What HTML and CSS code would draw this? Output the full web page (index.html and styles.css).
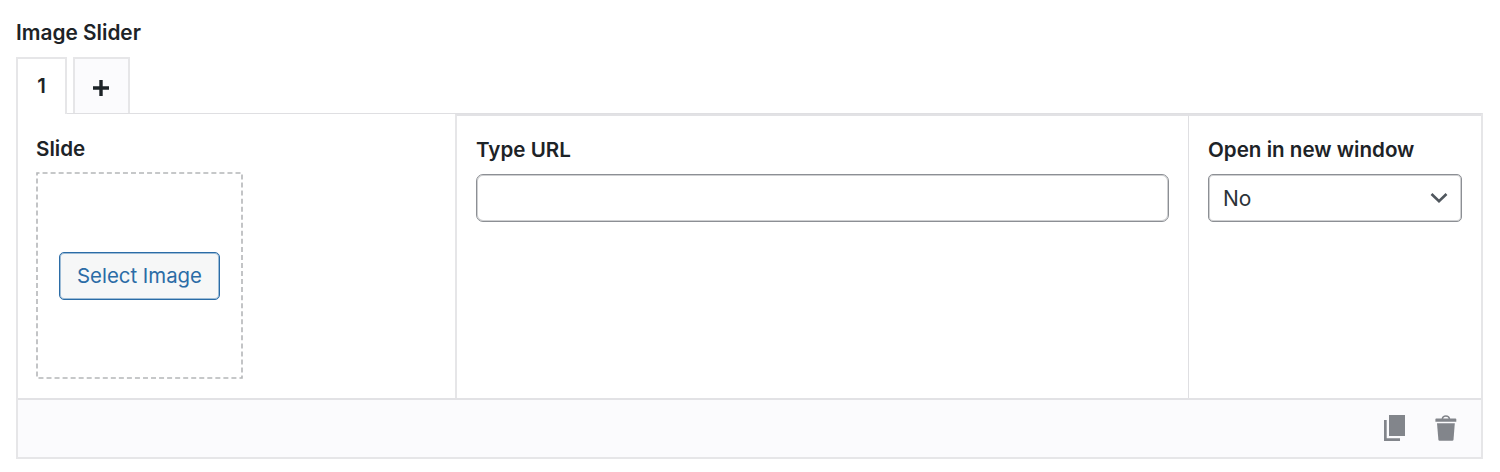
FILE: index.html
```
<!DOCTYPE html>
<html lang="en">
<head>
    <meta charset="UTF-8">
    <meta name="viewport" content="width=device-width, initial-scale=1.0">
    <title>Image Slider</title>
    <link rel="stylesheet" href="styles.css">
</head>
<body>

<div class="field">
    <h2 class="field-title">Image Slider</h2>

    <div class="tabs">
        <button class="tab active">1</button>
        <button class="tab add" aria-label="Add slide">
            <svg width="16" height="16" viewBox="0 0 16 16"><path d="M8 0v16M0 8h16" stroke="#1d2327" stroke-width="3.4"/></svg>
        </button>
    </div>

    <div class="group">
        <div class="columns">
            <div class="column slide">
                <span class="label">Slide</span>
                <div class="dropzone">
                    <svg class="dashes" width="207" height="207"><rect x="1" y="1" width="205" height="205"/></svg>
                    <button class="select-image">Select Image</button>
                </div>
            </div>
            <div class="column url">
                <label class="label" for="url">Type URL</label>
                <input type="text" id="url" class="control">
            </div>
            <div class="column window">
                <label class="label" for="target">Open in new window</label>
                <div class="select-wrap">
                    <select id="target" class="control">
                        <option>No</option>
                        <option>Yes</option>
                    </select>
                    <svg class="chevron" width="18" height="12" viewBox="0 0 18 12"><path d="M1.500 2l7.500 7.300L16.500 2" fill="none" stroke="#50575e" stroke-width="2.600"/></svg>
                </div>
            </div>
        </div>

        <div class="actions">
            <svg width="22" height="26" viewBox="0 0 22 26" fill="#82858b"><path d="M5 0h16v21H5z"/><path d="M0 5h2.700v18.300H16V26H0z"/></svg>
            <svg width="22" height="26" viewBox="0 0 22 26" fill="#82858b"><path d="M1.200 3.500h19.300q.8 0 .8.800v2.400H.4V4.300q0-.8.800-.8z"/><path d="M7.300 4c.5-4 6.600-4 7.200 0" fill="none" stroke="#82858b" stroke-width="1.500"/><path d="M2 8.300h17.800l-1.300 16.500q-.1 1-1.200 1H4.600q-1.100 0-1.200-1z"/></svg>
        </div>
    </div>
</div>

</body>
</html>
```
FILE: styles.css
```
* {
    box-sizing: border-box;
    margin: 0;
    padding: 0;
}

body {
    font-family: Inter, 'Liberation Sans', sans-serif;
    font-size: 20.4px;
    color: #1d2327;
    background: #fff;
}

button, input, select {
    font: inherit;
    color: inherit;
}

.field {
    width: 1467px;
    margin-left: 16px;
    padding-top: 21px;
}

.field-title, .label {
    font-size: 20.6px;
    font-weight: 600;
    line-height: 24px;
}

.field-title {
    font-size: 20.8px;
}

/* Tabs */
.tabs {
    display: flex;
    gap: 6px;
    margin-top: 12px;
}

.tab {
    display: flex;
    align-items: center;
    justify-content: center;
    height: 56px;
    border: 2px solid #e6e6e8;
    border-bottom: none;
    background: #fbfbfd;
    font-weight: 600;
}

.tab.active {
    position: relative;
    z-index: 1;
    width: 51px;
    height: 57px;
    padding-bottom: 2px;
    margin-bottom: -1px;
    background: #fff;
}

.tab.add {
    width: 57px;
    padding: 3px 1px 0 0;
}

/* Slide fields */
.group {
    border: 2px solid #e6e6e8;
    border-top: 1px solid #dfdfe2;
}

.columns {
    display: flex;
    height: 284px;
}

.column {
    display: flex;
    flex-direction: column;
    align-items: flex-start;
    padding: 22px 19px 0;
}

.slide {
    width: 437px;
    padding: 23px 18px 0;
}

.url {
    flex: 1;
    border-top: 2px solid #e2e2e5;
    border-left: 2px solid #e6e6e8;
}

.window {
    width: 293px;
    border-top: 2px solid #e2e2e5;
    border-left: 1px solid #dfdfe2;
}

.dropzone {
    display: grid;
    place-items: center;
    width: 207px;
    height: 207px;
    margin-top: 11px;
}

.dropzone > * {
    grid-area: 1 / 1;
}

.dashes rect {
    fill: none;
    stroke: #b4b6b8;
    stroke-width: 1.6;
    stroke-dasharray: 5 3.040;
    stroke-dashoffset: 2.5;
}

.select-image {
    width: 161px;
    height: 48px;
    border: 1px solid #2b6ca6;
    border-radius: 5px;
    box-shadow: inset 0 0 0 1px #9dbcd6;
    background: #f6f7f7;
    color: #2b6ca6;
    z-index: 1;
}

.control {
    width: 100%;
    height: 48px;
    margin-top: 12px;
    padding: 0 14px;
    border: 1px solid #8c8f94;
    border-radius: 7px;
    box-shadow: inset 0 0 0 1px #cfd0d2;
    background: #fff;
    appearance: none;
}

.select-wrap {
    position: relative;
    width: 100%;
}

.select-wrap .control {
    border-radius: 5px;
    color: #2c3338;
    font-size: 21px;
}

.chevron {
    position: absolute;
    right: 14px;
    top: 30px;
}

/* Clone and delete */
.actions {
    display: flex;
    align-items: center;
    justify-content: flex-end;
    gap: 29px;
    height: 59px;
    padding: 0 24px 1px 0;
    border-top: 2px solid #e2e2e5;
    background: #fbfbfd;
}
```
